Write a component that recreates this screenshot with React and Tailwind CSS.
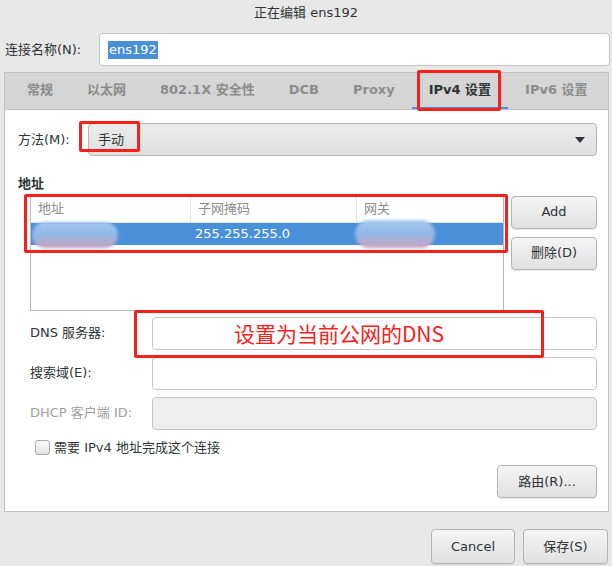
import React from 'react';

const font = { fontFamily: '"DejaVu Sans", "Noto Sans CJK SC", sans-serif' };

const Button = ({ children, className = '' }) => (
  <div
    className={`flex items-center justify-center rounded-[4px] border border-[#b3b3b3] bg-gradient-to-b from-[#f5f5f5] to-[#e1e1e1] text-[13px] text-[#2e3436] shadow-[0_1px_0_rgba(0,0,0,0.08)] ${className}`}
  >
    {children}
  </div>
);

const Field = ({ label, dim, disabled }) => (
  <div className="flex items-center h-[33px]">
    <div className={`w-[122px] text-[13px] ${dim ? 'text-[#a0a0a0]' : 'text-[#2e3436]'}`}>{label}</div>
    <div
      className={`flex-1 h-full rounded-[4px] border border-[#c4c4c4] ${disabled ? 'bg-[#eeeeee]' : 'bg-white'}`}
    />
  </div>
);

const Blur = ({ className }) => (
  <div
    className={`absolute rounded-full bg-gradient-to-b from-[#a9c9ef] via-[#8fb6e6] to-[#c9a2bd] blur-[1.5px] ${className}`}
  />
);

const tabs = ['常规', '以太网', '802.1X 安全性', 'DCB', 'Proxy', 'IPv4 设置', 'IPv6 设置'];

export default function App() {
  return (
    <div className="relative w-[612px] h-[566px] overflow-hidden bg-[#e8e8e8] flex flex-col" style={font}>
      {/* Title */}
      <div className="h-[26px] flex items-center justify-center text-[13px] text-[#2e3436]">正在编辑 ens192</div>

      {/* Connection name */}
      <div className="flex items-center pl-[5px] pr-[2px] mt-[7px]">
        <div className="w-[94px] text-[13px] text-[#2e3436]">连接名称(N):</div>
        <div className="flex-1 h-[33px] rounded-[4px] border border-[#c4c4c4] bg-white flex items-center pl-[8px]">
          <span className="bg-[#4a90d9] text-white text-[13px] leading-[18px] px-[1px]">ens192</span>
        </div>
      </div>

      {/* Notebook */}
      <div className="mt-[6px] ml-[4px] mr-[3px] flex flex-col">
        <div className="h-[37px] bg-[#d5d5d5] border border-[#c0c0c0] border-b-0 flex items-stretch pl-[5px]">
          {tabs.map((t) => {
            const active = t === 'IPv4 设置';
            return (
              <div
                key={t}
                className={`flex items-center px-[17px] text-[13px] font-bold border-b-[2px] ${
                  active ? 'text-[#2e3436] border-[#4a90d9]' : 'text-[#8c8c8c] border-transparent'
                }`}
              >
                {t}
              </div>
            );
          })}
        </div>

        <div className="h-[403px] bg-white border border-[#c0c0c0] pl-[13px] pr-[11px] pt-[13px] flex flex-col">
          {/* Method */}
          <div className="flex items-center">
            <div className="w-[70px] text-[13px] text-[#2e3436]">方法(M):</div>
            <div className="flex-1 h-[33px] rounded-[4px] border border-[#b6b6b6] bg-gradient-to-b from-[#ededed] to-[#dfdfdf] flex items-center justify-between pl-[9px] pr-[11px] text-[13px] text-[#2e3436]">
              <span>手动</span>
              <svg width="10" height="6" viewBox="0 0 10 6">
                <path d="M0 0 L10 0 L5 6 Z" fill="#2e3436" />
              </svg>
            </div>
          </div>

          <div className="mt-[18px] text-[13px] font-bold text-[#2e3436]">地址</div>

          {/* Address table + buttons */}
          <div className="flex mt-[2px] pl-[12px] gap-[7px]">
            <div className="relative w-[476px] h-[115px] border border-[#b8b8b8] bg-white">
              <div className="flex h-[26px] border-b border-[#e4e4e4] text-[13px] text-[#8c8c8c]">
                <div className="w-[160px] pl-[7px] flex items-center border-r border-[#e4e4e4]">地址</div>
                <div className="w-[166px] pl-[7px] flex items-center border-r border-[#e4e4e4]">子网掩码</div>
                <div className="flex-1 pl-[7px] flex items-center">网关</div>
              </div>
              <div className="flex h-[22px] bg-[#4a90d9] text-[13px] text-white">
                <div className="w-[160px]" />
                <div className="w-[166px] pl-[4px] flex items-center">255.255.255.0</div>
                <div className="flex-1" />
              </div>
              <Blur className="left-[1px] top-[25px] w-[86px] h-[26px]" />
              <Blur className="left-[324px] top-[23px] w-[80px] h-[28px]" />
            </div>
            <div className="flex flex-col gap-[8px]">
              <Button className="w-[86px] h-[33px]">Add</Button>
              <Button className="w-[86px] h-[33px]">删除(D)</Button>
            </div>
          </div>

          {/* DNS etc */}
          <div className="flex flex-col gap-[7px] mt-[6px] pl-[12px]">
            <Field label="DNS 服务器:" />
            <Field label="搜索域(E):" />
            <Field label="DHCP 客户端 ID:" dim disabled />
          </div>

          <div className="flex items-center mt-[8px] pl-[17px] gap-[4px]">
            <div className="w-[15px] h-[15px] rounded-[3px] border border-[#a8a8a8] bg-gradient-to-b from-[#fafafa] to-[#e4e4e4]" />
            <span className="text-[13px] text-[#2e3436]">需要 IPv4 地址完成这个连接</span>
          </div>

          <div className="flex justify-end mt-[8px]">
            <Button className="w-[100px] h-[33px]">路由(R)...</Button>
          </div>
        </div>
      </div>

      {/* Bottom buttons */}
      <div className="flex justify-end gap-[8px] pr-[4px] mt-[17px]">
        <Button className="w-[84px] h-[35px]">Cancel</Button>
        <Button className="w-[85px] h-[35px]">保存(S)</Button>
      </div>

      {/* Red annotations */}
      <div className="absolute left-[417px] top-[70px] w-[84px] h-[41px] border-[3px] border-[#f5221b] rounded-[2px]" />
      <div className="absolute left-[79px] top-[121px] w-[61px] h-[31px] border-[3px] border-[#f5221b] rounded-[2px]" />
      <div className="absolute left-[24px] top-[194px] w-[484px] h-[59px] border-[3px] border-[#f5221b] rounded-[2px]" />
      <div className="absolute left-[134px] top-[310px] w-[410px] h-[48px] border-[3px] border-[#f5221b] rounded-[2px] flex items-center justify-center">
        <span
          className="text-[21px] text-[#f5221b]"
          style={{ fontFamily: '"Noto Sans CJK SC", sans-serif' }}
        >
          设置为当前公网的DNS
        </span>
      </div>
    </div>
  );
}
